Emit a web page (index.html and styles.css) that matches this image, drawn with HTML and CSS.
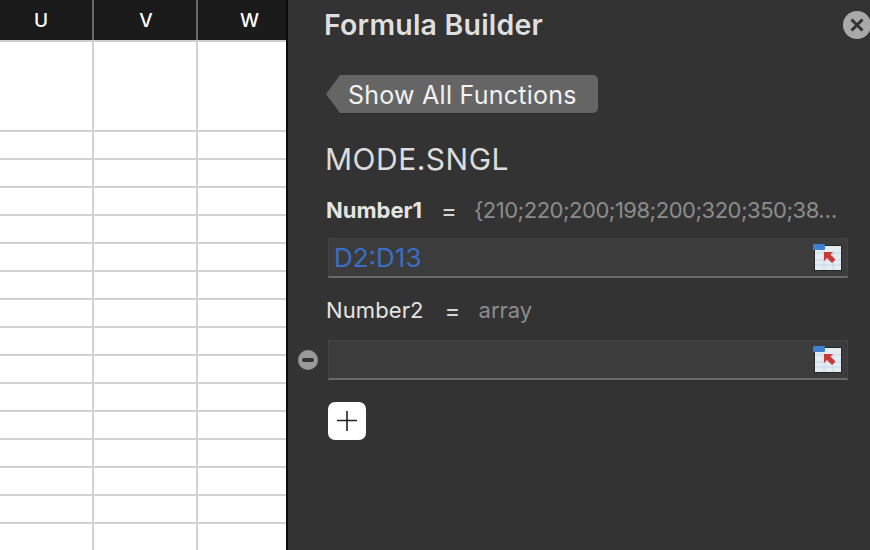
FILE: index.html
```html
<!DOCTYPE html>
<html lang="en">
<head>
<meta charset="utf-8">
<title>Formula Builder</title>
<link rel="stylesheet" href="styles.css">
</head>
<body>
<div class="app">
  <section class="sheet">
    <div class="head"><div class="hc c1">U</div><div class="hc c2">V</div><div class="hc c3">W</div></div>
    <div class="row tall"><div class="cell c1"></div><div class="cell c2"></div><div class="cell c3"></div></div>
    <div class="row"><div class="cell c1"></div><div class="cell c2"></div><div class="cell c3"></div></div>
    <div class="row"><div class="cell c1"></div><div class="cell c2"></div><div class="cell c3"></div></div>
    <div class="row"><div class="cell c1"></div><div class="cell c2"></div><div class="cell c3"></div></div>
    <div class="row"><div class="cell c1"></div><div class="cell c2"></div><div class="cell c3"></div></div>
    <div class="row"><div class="cell c1"></div><div class="cell c2"></div><div class="cell c3"></div></div>
    <div class="row"><div class="cell c1"></div><div class="cell c2"></div><div class="cell c3"></div></div>
    <div class="row"><div class="cell c1"></div><div class="cell c2"></div><div class="cell c3"></div></div>
    <div class="row"><div class="cell c1"></div><div class="cell c2"></div><div class="cell c3"></div></div>
    <div class="row"><div class="cell c1"></div><div class="cell c2"></div><div class="cell c3"></div></div>
    <div class="row"><div class="cell c1"></div><div class="cell c2"></div><div class="cell c3"></div></div>
    <div class="row"><div class="cell c1"></div><div class="cell c2"></div><div class="cell c3"></div></div>
    <div class="row"><div class="cell c1"></div><div class="cell c2"></div><div class="cell c3"></div></div>
    <div class="row"><div class="cell c1"></div><div class="cell c2"></div><div class="cell c3"></div></div>
    <div class="row"><div class="cell c1"></div><div class="cell c2"></div><div class="cell c3"></div></div>
    <div class="row"><div class="cell c1"></div><div class="cell c2"></div><div class="cell c3"></div></div>
  </section>
  <aside class="panel">
    <header class="title-bar">
      <h1 class="title">Formula Builder</h1>
      <button class="close" aria-label="Close">
        <svg width="28" height="28" viewBox="0 0 28 28"><circle cx="14" cy="14" r="14" fill="#a9a9a9"/><path d="M8.500 8.500 19.500 19.500M19.500 8.500 8.500 19.500" stroke="#333" stroke-width="3" fill="none"/></svg>
      </button>
    </header>
    <button class="back">
      <span class="back-tip"></span>
      <span class="back-label">Show All Functions</span>
    </button>
    <h2 class="func">MODE.SNGL</h2>
    <div class="arg">
      <span class="arg-name strong">Number1</span><span class="eq">=</span><span class="arg-val">{210;220;200;198;200;320;350;38…</span>
    </div>
    <div class="field">
      <span class="field-text">D2:D13</span>
      <svg class="picker" width="29" height="27" viewBox="0 0 29 27"><rect x="1" y="1" width="28" height="26" fill="#262626"/><rect x="2" y="2" width="26" height="24" fill="#e3ebf3"/><path d="M2 9h26M2 16h26M2 21h26M11 7v19M20 7v19" stroke="#c6d6e4" stroke-width="1"/><rect y="0" width="12" height="6" rx="1" fill="#3f7fd0"/><path d="M11 8h9l-2.500 2.500 5 5-3.500 3.500-5-5L11 17z" fill="#c8393a"/></svg>
    </div>
    <div class="arg second">
      <span class="arg-name">Number2</span><span class="eq wide">=</span><span class="arg-val hint">array</span>
    </div>
    <div class="field-row">
      <svg class="minus" width="20" height="20" viewBox="0 0 20 20"><circle cx="10" cy="10" r="10" fill="#999"/><rect x="4" y="8" width="12" height="4" rx="2" fill="#333"/></svg>
      <div class="field">
        <svg class="picker" width="29" height="27" viewBox="0 0 29 27"><rect x="1" y="1" width="28" height="26" fill="#262626"/><rect x="2" y="2" width="26" height="24" fill="#e3ebf3"/><path d="M2 9h26M2 16h26M2 21h26M11 7v19M20 7v19" stroke="#c6d6e4" stroke-width="1"/><rect y="0" width="12" height="6" rx="1" fill="#3f7fd0"/><path d="M11 8h9l-2.500 2.500 5 5-3.500 3.500-5-5L11 17z" fill="#c8393a"/></svg>
      </div>
    </div>
    <button class="add" aria-label="Add">
      <svg width="20" height="20" viewBox="0 0 20 20"><path d="M0 9.500H20M10 0V20" stroke="#222" stroke-width="1.600" fill="none"/></svg>
    </button>
  </aside>
</div>
</body>
</html>
```

FILE: styles.css
```css
* { box-sizing: border-box; }
html, body { margin: 0; height: 100%; overflow: hidden; }
body { font-family: "Inter", "Liberation Sans", sans-serif; background: #333; }
.app { display: flex; width: 870px; height: 550px; overflow: hidden; }

.sheet { width: 288px; height: 550px; flex: none; background: #fff; border-right: 2px solid #0b0b0b; overflow: hidden; }
.head { display: flex; height: 42px; background: #1a1a1a; border-bottom: 2px solid #cfcfcf; }
.hc { display: flex; align-items: center; justify-content: center; color: #fff; font-size: 19px; font-weight: 500; border-right: 2px solid #6a6a6a; height: 40px; }
.c1 { width: 94px; }
.c2 { width: 104px; }
.c3 { width: 88px; border-right: 0; }
.hc.c1 { padding-left: 0; justify-content: flex-start; text-indent: 34px; }
.hc.c2 { padding-left: 2px; }
.hc.c3 { padding-left: 15px; }
.row { display: flex; height: 28px; border-bottom: 2px solid #d2d2d2; }
.row.tall { height: 90px; }
.cell { border-right: 2px solid #d2d2d2; }
.cell.c3 { border-right: 0; }

.panel { flex: 1; background: #333; padding: 0 22px 0 36px; color: #e4e4e4; min-width: 0; }
.title-bar { display: flex; align-items: center; justify-content: space-between; height: 50px; padding-bottom: 1px; margin-right: -22px; }
.title { margin: 0; font-size: 28.500px; font-weight: 600; color: #dfdfdf; letter-spacing: .2px; }
.close { border: 0; padding: 0; background: none; display: block; height: 28px; margin-right: -1px; }
.back { display: flex; align-items: stretch; height: 38px; margin: 25px 0 0 2px; padding: 0; border: 0; background: none; color: #fff; font: inherit; }
.back-tip { width: 0; height: 0; border-top: 19px solid transparent; border-bottom: 19px solid transparent; border-right: 14px solid #656565; }
.back-label { display: flex; align-items: center; background: #656565; border-radius: 0 5px 5px 0; padding: 1px 21px 0 8px; font-size: 25px; letter-spacing: .25px; color: #f2f2f2; box-shadow: 0 1px 0 #2a2a2a; white-space: nowrap; }
.func { margin: 26px 0 0 1px; font-size: 30px; line-height: 40px; font-weight: 400; color: #dcdcdc; letter-spacing: .5px; }
.arg { display: flex; align-items: center; height: 30px; margin: 16px 0 0 2px; font-size: 22px; white-space: nowrap; }
.arg-name { color: #e4e4e4; letter-spacing: .1px; }
.arg-name.strong { font-weight: 700; letter-spacing: 0; }
.eq { margin-left: 19px; color: #d6d6d6; width: 14px; font-size: 24px; }
.eq.wide { margin-left: 21px; }
.arg-val { margin-left: 19px; color: #8c8c8c; letter-spacing: -.5px; }
.hint { margin-left: 20px; letter-spacing: 0; }
.field { display: flex; flex: 1; align-items: center; justify-content: space-between; height: 40px; width: 520px; margin: 13px 0 0 4px; padding: 0 5px 0 5px; background: #3c3c3c; border: 1px solid #444; border-bottom: 2px solid #6a6a6a; }
.field-text { color: #3a6fc4; font-size: 26px; letter-spacing: 0; }
.picker { margin-left: auto; }
.second { margin-top: 17px; }
.field-row { display: flex; align-items: flex-end; position: relative; height: 40px; margin-top: 15px; }
.field-row .field { margin-top: 0; flex: none; }
.minus { position: absolute; left: -26px; top: 10px; }
.add { display: flex; align-items: center; justify-content: center; width: 38px; height: 38px; margin: 22px 0 0 4px; padding: 0; border: 0; border-radius: 7px; background: #fff; }
```
